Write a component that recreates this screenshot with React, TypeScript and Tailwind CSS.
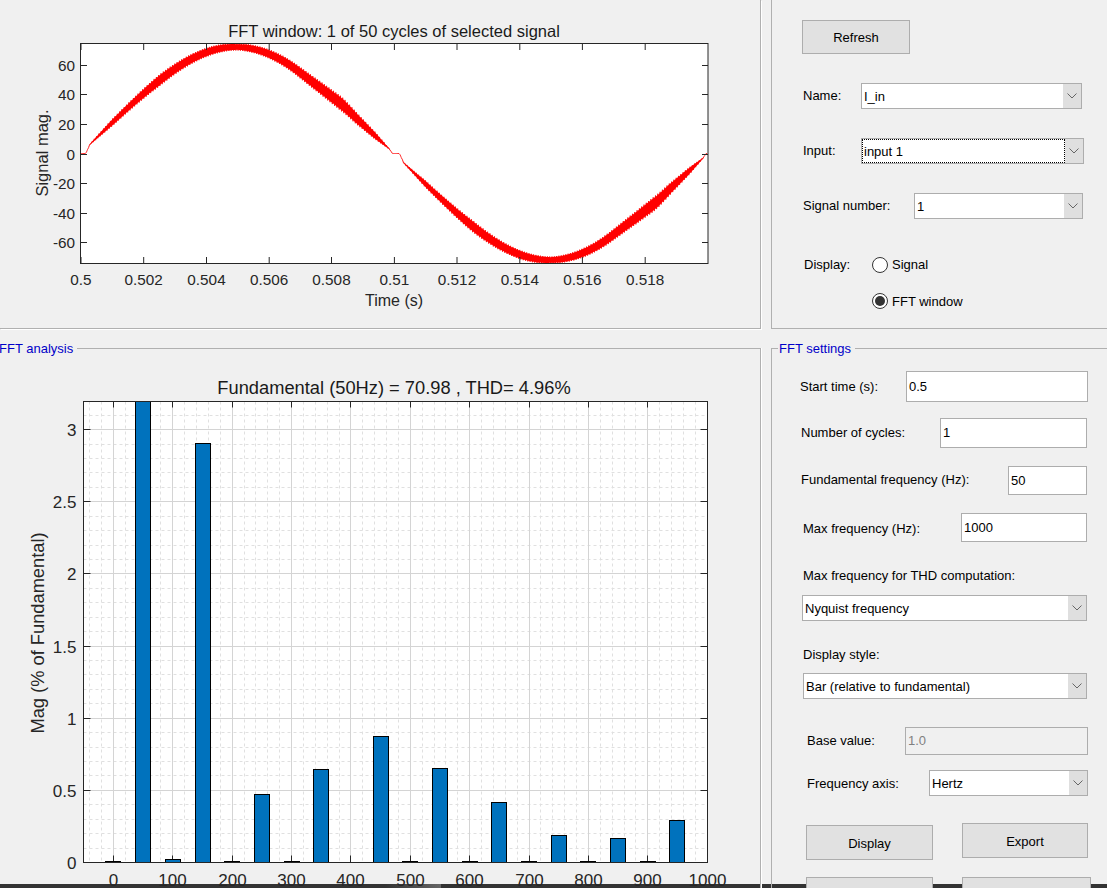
const FONT = "font-['Liberation_Sans',Arial,sans-serif]";

// half width of the ripple band over half a cycle (vertical pixels)
const WIDTHS: [number, number][] = [
  [0, 0],
  [0.02, 0],
  [0.04, 1],
  [0.1, 3.6],
  [0.25, 6],
  [0.4, 4.6],
  [0.5, 3.4],
  [0.6, 4.6],
  [0.75, 6.4],
  [0.83, 7.4],
  [0.87, 6.4],
  [0.94, 3.8],
  [0.98, 0.8],
  [0.99, 0],
  [1, 0],
];

function bandWidth(half: number) {
  for (let i = 1; i < WIDTHS.length; i++) {
    const [a, wa] = WIDTHS[i - 1];
    const [b, wb] = WIDTHS[i];
    if (half <= b) return wa + ((half - a) / (b - a)) * (wb - wa);
  }
  return 0;
}

function gauss(x: number, c: number, s: number) {
  return Math.exp(-Math.pow((x - c) / s, 2));
}

function rawValue(half: number) {
  const th = Math.PI * half;
  return (
    70 * Math.sin(th) -
    1.8 * Math.sin(3 * th) +
    0.8 * Math.sin(2 * th) -
    1 * gauss(half, 0.73, 0.06) +
    0.7 * gauss(half, 0.84, 0.03)
  );
}

function signalValue(half: number) {
  // flat for a moment around the zero crossing
  if (half < 0.017 || half > 0.994) return 0;
  if (half < 0.03) return ((half - 0.017) / 0.013) * rawValue(0.03);
  if (half > 0.985) return ((0.994 - half) / 0.009) * rawValue(0.985);
  return rawValue(half);
}

function signalGeometry() {
  const x0 = 80.5;
  const x1 = 708;
  const zig: string[] = [];
  const upper: string[] = [];
  const lower: string[] = [];
  let up = true;
  for (let x = x0; x <= x1; x += 1.15) {
    const t = (x - x0) / (x1 - x0);
    const half = t < 0.5 ? t * 2 : (t - 0.5) * 2;
    const sign = t < 0.5 ? 1 : -1;
    const mid = 153.5 - sign * signalValue(half) * 1.483;
    const w = bandWidth(half);
    zig.push(`${x.toFixed(1)},${(mid + (up ? -w : w)).toFixed(1)}`);
    upper.push(`${x.toFixed(1)},${(mid - w * 0.82).toFixed(1)}`);
    lower.unshift(`${x.toFixed(1)},${(mid + w * 0.82).toFixed(1)}`);
    up = !up;
  }
  return { zig: zig.join(" "), fill: upper.concat(lower).join(" ") };
}

function SignalPlot() {
  const xTicks = [
    [81, "0.5"],
    [143.7, "0.502"],
    [206.5, "0.504"],
    [269.2, "0.506"],
    [331.5, "0.508"],
    [394.4, "0.51"],
    [457, "0.512"],
    [519.8, "0.514"],
    [582.4, "0.516"],
    [645.2, "0.518"],
  ] as const;
  const yTicks = [60, 40, 20, 0, -20, -40, -60];
  const geo = signalGeometry();
  return (
    <svg width="759" height="328" className="block">
      <rect x="80.5" y="43.5" width="627.5" height="220" fill="#fff" />
      <polygon points={geo.fill} fill="#ff0000" />
      <polyline points={geo.zig} fill="none" stroke="#ff0000" strokeWidth="0.8" />
      <rect x="80.5" y="43.5" width="627.5" height="220" fill="none" stroke="#262626" />
      {xTicks.map(([x, label]) => (
        <g key={label}>
          <path d={`M${x} 263V257M${x} 44V50`} stroke="#262626" />
          <text x={x} y="285" textAnchor="middle" fontSize="15.3" fill="#262626">
            {label}
          </text>
        </g>
      ))}
      {yTicks.map((v) => {
        const y = Math.round(153.5 - v * 1.483) + 0.5;
        return (
          <g key={v}>
            <path d={`M81 ${y}H87M708 ${y}H702`} stroke="#262626" />
            <text x="75" y={y + 5} textAnchor="end" fontSize="15.3" fill="#262626">
              {v}
            </text>
          </g>
        );
      })}
      <text x="394" y="37" textAnchor="middle" fontSize="16.5" fill="#1a1a1a">
        FFT window: 1 of 50 cycles of selected signal
      </text>
      <text x="394" y="306" textAnchor="middle" fontSize="16" fill="#262626">
        Time (s)
      </text>
      <text transform="translate(48 153) rotate(-90)" textAnchor="middle" fontSize="16.5" fill="#262626">
        Signal mag.
      </text>
    </svg>
  );
}

const BARS: [number, number][] = [
  [0, 0.006],
  [50, 3.4],
  [100, 0.02],
  [150, 2.905],
  [200, 0.006],
  [250, 0.47],
  [300, 0.006],
  [350, 0.645],
  [450, 0.87],
  [500, 0.006],
  [550, 0.65],
  [600, 0.006],
  [650, 0.415],
  [700, 0.006],
  [750, 0.185],
  [800, 0.006],
  [850, 0.165],
  [900, 0.006],
  [950, 0.29],
];

function FftPlot() {
  const left = 83.5;
  const right = 707.5;
  const top = 401.5 - 349;
  const bottom = 862.5 - 349;
  const fx = (f: number) => Math.round(113 + f * 0.5937) + 0.5;
  const fy = (m: number) => Math.round(bottom - m * 144.3 - 0.5) + 0.5;
  const barX = (f: number) => Math.round(135.15 + (f - 50) * 0.5937) + 0.5;
  const majorX = [0, 100, 200, 300, 400, 500, 600, 700, 800, 900, 1000];
  const majorY = [0, 0.5, 1, 1.5, 2, 2.5, 3];
  const minorX: number[] = [];
  for (let f = -40; f < 1000; f += 20) if (f % 100 !== 0) minorX.push(f);
  const minorY: number[] = [];
  for (let i = 1; i < 32; i++) if (i % 5 !== 0) minorY.push(i / 10);
  return (
    <svg width="759" height="540" className="block">
      <rect x={left} y={top} width={right - left} height={bottom - top} fill="#fff" />
      {minorX.map((f) => (
        <path key={f} d={`M${fx(f)} ${top}V${bottom}`} stroke="#e0e0e0" strokeDasharray="3 3" />
      ))}
      {minorY.map((m) => (
        <path key={m} d={`M${left} ${fy(m)}H${right}`} stroke="#e0e0e0" strokeDasharray="3 3" />
      ))}
      {majorX.map((f) => (
        <path key={f} d={`M${fx(f)} ${top}V${bottom}`} stroke="#d4d4d4" />
      ))}
      {majorY.map((m) => (
        <path key={m} d={`M${left} ${fy(m)}H${right}`} stroke="#d4d4d4" />
      ))}
      {majorX.map((f) => (
        <g key={f}>
          <path d={`M${fx(f)} ${bottom}v-7M${fx(f)} ${top}v6`} stroke="#262626" />
          <text x={fx(f)} y={bottom + 23} textAnchor="middle" fontSize="17" fill="#262626">
            {f}
          </text>
        </g>
      ))}
      {majorY.map((m) => (
        <g key={m}>
          <path d={`M${left} ${fy(m)}h7M${right} ${fy(m)}h-7`} stroke="#262626" />
          <text x={left - 7} y={fy(m) + 6} textAnchor="end" fontSize="17" fill="#262626">
            {m}
          </text>
        </g>
      ))}
      {BARS.map(([f, m]) => {
        const y = Math.max(fy(m), top);
        return <rect key={f} x={barX(f)} y={y} width="15" height={bottom - y} fill="#0072bd" stroke="#000" />;
      })}
      <rect x={left} y={top} width={right - left} height={bottom - top} fill="none" stroke="#262626" />
      <text x="394" y={top - 8} textAnchor="middle" fontSize="18.3" fill="#1a1a1a">
        Fundamental (50Hz) = 70.98 , THD= 4.96%
      </text>
      <text transform={`translate(44 ${(top + bottom) / 2 + 1}) rotate(-90)`} textAnchor="middle" fontSize="18.3" fill="#262626">
        Mag (% of Fundamental)
      </text>
    </svg>
  );
}

function Chevron() {
  return (
    <svg width="10" height="6" viewBox="0 0 10 6" fill="none" stroke="#666">
      <path d="M0.5 0.5L5 5L9.5 0.5" />
    </svg>
  );
}

function Select({ value, className, focus }: { value: string; className: string; focus?: boolean }) {
  return (
    <div className={`flex h-[26px] items-stretch border border-[#adadad] bg-white text-black ${className}`}>
      <div className={`flex flex-1 items-center pt-[2px] ${focus ? "border border-dotted border-black pl-[1px]" : "pl-[2px]"}`}>
        {value}
      </div>
      <div className="flex w-[18px] items-center justify-center bg-[#dfdfdf]">
        <Chevron />
      </div>
    </div>
  );
}

function Input({ value, className, disabled }: { value: string; className: string; disabled?: boolean }) {
  return (
    <div
      className={`flex items-center border border-[#adadad] pl-[2px] ${
        disabled ? "bg-[#f0f0f0] text-[#808080]" : "bg-white text-black"
      } ${className}`}
    >
      {value}
    </div>
  );
}

function Button({ label, className }: { label: string; className: string }) {
  return (
    <div className={`flex items-center justify-center border border-[#adadad] bg-[#e1e1e1] pt-[2px] text-black ${className}`}>
      {label}
    </div>
  );
}

function Radio({ checked }: { checked?: boolean }) {
  return (
    <span className="flex h-4 w-4 items-center justify-center rounded-full border border-[#333] bg-white">
      {checked && <span className="h-[10px] w-[10px] rounded-full bg-[#333]" />}
    </span>
  );
}

export default function App() {
  return (
    <div className={`flex h-[888px] w-[1107px] flex-col overflow-hidden bg-[#f0f0f0] text-[13px] leading-[16px] ${FONT}`}>
      <div className="flex min-h-0 flex-1">
        {/* Left column: plots */}
        <div className="w-[761px] shrink-0">
          <div className="h-[329px] border-r border-b border-[#b0b0b0] shadow-[1px_1px_0_#fff]">
            <SignalPlot />
          </div>
          <div className="relative mt-[19px] border-t border-r border-[#b0b0b0] shadow-[1px_0_0_#fff]">
            <span className="absolute top-[-8px] left-[-1px] bg-[#f0f0f0] pr-[4px] text-[#0000c8]">FFT analysis</span>
            <FftPlot />
          </div>
        </div>

        {/* Right column: controls */}
        <div className="ml-[10px] flex-1">
          <div className="h-[329px] border-b border-l border-[#b0b0b0] pt-[20px] text-black">
            <Button label="Refresh" className="ml-[30px] h-[34px] w-[108px]" />
            <div className="mt-[29px] flex items-center">
              <span className="ml-[31px] w-[58px]">Name:</span>
              <Select value="I_in" className="w-[221px]" />
            </div>
            <div className="mt-[29px] flex items-center">
              <span className="ml-[31px] w-[58px]">Input:</span>
              <Select value="input 1" className="w-[223px]" focus />
            </div>
            <div className="mt-[29px] flex items-center">
              <span className="ml-[31px] w-[111px]">Signal number:</span>
              <Select value="1" className="w-[169px]" />
            </div>
            <div className="mt-[38px] flex items-center">
              <span className="ml-[32px] w-[68px]">Display:</span>
              <Radio />
              <span className="ml-[4px]">Signal</span>
            </div>
            <div className="mt-[19px] flex items-center">
              <span className="ml-[100px]" />
              <Radio checked />
              <span className="ml-[4px] pt-[2px]">FFT window</span>
            </div>
          </div>
          <div className="relative mt-[19px] h-[600px] border-t border-l border-[#b0b0b0] text-black">
            <span className="absolute top-[-8px] left-[6px] bg-[#f0f0f0] px-[1px] pr-[4px] text-[#0000c8]">FFT settings</span>
            <div className="mt-[22px] flex items-center">
              <span className="ml-[28px] w-[106px]">Start time (s):</span>
              <Input value="0.5" className="h-[31px] w-[182px]" />
            </div>
            <div className="mt-[16px] flex items-center">
              <span className="ml-[29px] w-[139px]">Number of cycles:</span>
              <Input value="1" className="h-[30px] w-[147px]" />
            </div>
            <div className="mt-[18px] flex items-center">
              <span className="ml-[29px] w-[207px] pb-[2px]">Fundamental frequency (Hz):</span>
              <Input value="50" className="h-[29px] w-[79px]" />
            </div>
            <div className="mt-[18px] flex items-center">
              <span className="ml-[31px] w-[158px] pt-[2px]">Max frequency (Hz):</span>
              <Input value="1000" className="h-[29px] w-[126px]" />
            </div>
            <div className="mt-[26px] ml-[31px]">Max frequency for THD computation:</div>
            <Select value="Nyquist frequency" className="mt-[11px] ml-[30px] w-[285px]" />
            <div className="mt-[26px] ml-[31px]">Display style:</div>
            <Select value="Bar (relative to fundamental)" className="mt-[10px] ml-[31px] w-[284px]" />
            <div className="mt-[28px] flex items-center">
              <span className="ml-[35px] w-[98px]">Base value:</span>
              <Input value="1.0" disabled className="h-[28px] w-[183px]" />
            </div>
            <div className="mt-[15px] flex items-center">
              <span className="ml-[35px] w-[122px] pt-[2px]">Frequency axis:</span>
              <Select value="Hertz" className="w-[159px]" />
            </div>
            <div className="mt-[27px] flex items-start">
              <Button label="Display" className="mt-[2px] ml-[34px] h-[35px] w-[127px]" />
              <Button label="Export" className="ml-[29px] h-[35px] w-[126px]" />
            </div>
            <div className="mt-[17px] flex items-start">
              <div className="ml-[34px] h-[35px] w-[127px] border border-[#adadad] bg-[#e1e1e1]" />
              <div className="ml-[29px] h-[35px] w-[129px] border border-[#adadad] bg-[#e1e1e1]" />
            </div>
          </div>
        </div>
      </div>
      <div className="flex h-[4px] shrink-0 bg-[#333333]">
        <div className="h-full w-[385px]" />
        <div className="h-full w-[56px] bg-gradient-to-r from-[#333333] to-[#666666]" />
      </div>
    </div>
  );
}
